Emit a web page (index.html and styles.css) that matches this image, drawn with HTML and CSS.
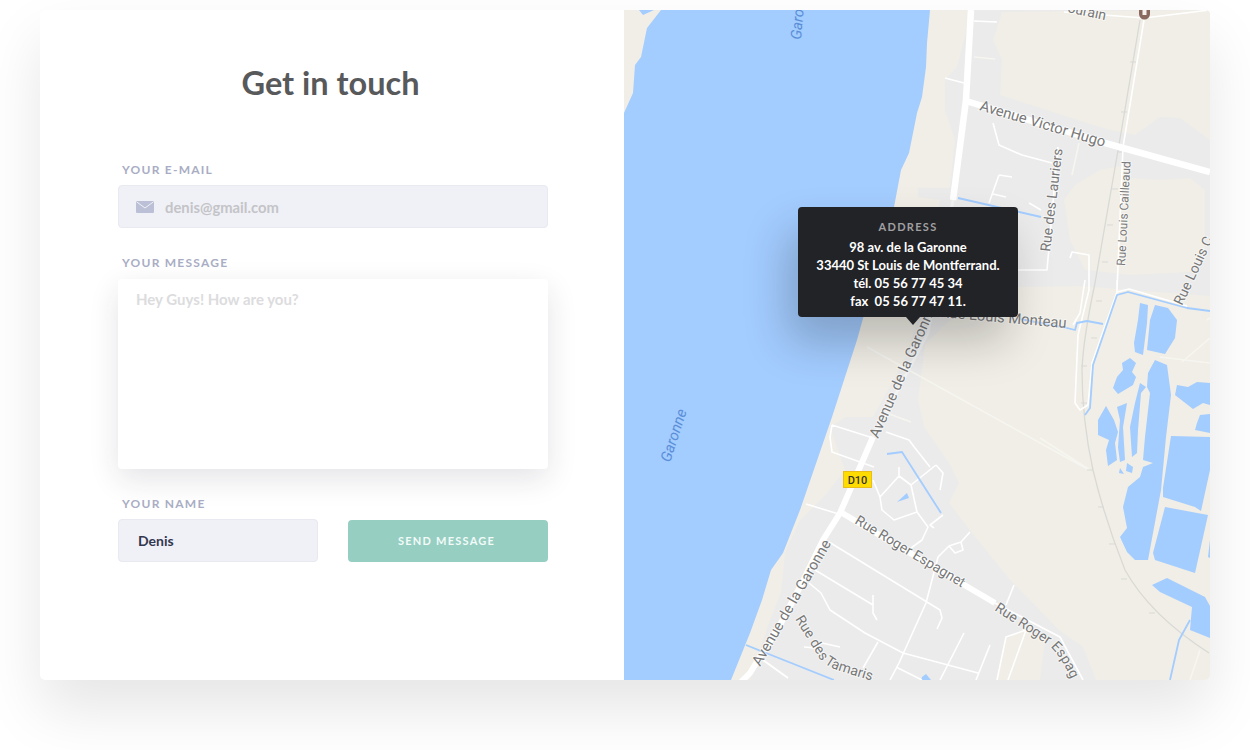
FILE: index.html
```html
<!DOCTYPE html>
<html lang="en">
<head>
<meta charset="utf-8">
<title>Get in touch</title>
<link rel="stylesheet" href="styles.css">
</head>
<body>
<main class="card">
  <section class="form">
    <h1 class="title">Get in touch</h1>
    <div class="label">YOUR E-MAIL</div>
    <div class="input email">
      <svg class="mail" viewBox="0 0 18 12" width="18" height="12"><rect width="18" height="12" rx="1" fill="#bcc0d6"/><path d="M0.5 0.8 L9 7 L17.5 0.8" fill="none" stroke="#f0f1f6" stroke-width="1"/></svg>
      <span>denis@gmail.com</span>
    </div>
    <div class="label gap">YOUR MESSAGE</div>
    <div class="textarea">Hey Guys! How are you?</div>
    <div class="bottom">
      <div class="name-col">
        <div class="label gap">YOUR NAME</div>
        <div class="input name">Denis</div>
      </div>
      <div class="button">SEND MESSAGE</div>
    </div>
  </section>
  <section class="map">
    <svg class="map-svg" viewBox="624 10 586 670" width="586" height="670">
      <defs>
        <path id="lower-espagnet" d="M994 610L1048 645Q1062 656 1074 686"/>
        <path id="tamaris" d="M795 619L820 659Q827 667 840 671L882 684"/>
      </defs>
      <rect class="land" x="624" y="10" width="586" height="670"/>
      <!-- built-up zones -->
      <path class="urban" d="M972 10L1210 10L1210 296L1130 290L1080 286L1018 287L1000 300L960 310L945 325L925 345L918 400L924 427L949 463L959 483L949 503L972 533L1010 580L1059 630L1083 647L1096 680L750 680L770 620L781 593L785 553L800 520L827 493L845 470L830 427L846 417L873 417L903 363L911 340L925 300L940 200L918 197L918 188L950 188L955 140L945 110L945 80L957 67Z"/>
      <path class="land" d="M1002 12L1210 10L1210 140L1180 118L1160 117L1135 135L1110 130L1090 124L1000 95L1002 60L993 40Z"/>
      <path class="land" d="M1064 200L1075 185L1100 170L1125 165L1130 178L1160 180L1190 178L1205 190L1205 250L1190 272L1130 275L1085 270L1070 240Z"/>
      <path class="land" d="M997 680L1005 640L1026 628L1045 640L1040 680Z"/>
      <!-- river -->
      <path class="water" d="M661 10L647 28L641 57L635 65L633 93L624 113L624 680L731 680L750 633L762 600L771 570L783 553L800 510L832 417L857 340L894 207L901 170L909 153L917 113L922 97L926 67L927 43L930 10Z"/>
      <path class="water" d="M639 10L654 10L643 15Z"/>
      <!-- ponds -->
      <path class="water" d="M1140 303L1148 305L1147 323L1143 355L1135 352L1134 343L1138 320Z"/>
      <path class="water" d="M1155 305L1168 308L1177 320L1175 338L1165 354L1147 350L1150 320Z"/>
      <path class="water" d="M1130 358L1136 363L1132 372L1136 377L1133 385L1118 394L1113 388L1117 377L1123 370L1122 363Z"/>
      <path class="water" d="M1155 360L1167 365L1171 395L1166 437L1161 490L1148 560L1135 560L1127 552L1120 537L1127 528L1123 507L1128 487L1140 477L1143 467L1153 463L1143 460L1145 437L1150 393L1147 387L1148 373Z"/>
      <path class="water" d="M1140 383L1146 387L1141 393L1138 430L1137 453L1132 457L1130 427L1135 403Z"/>
      <path class="water" d="M1117 407L1127 403L1123 427L1125 460L1120 462L1118 447L1120 420Z"/>
      <path class="water" d="M1106 406L1114 420L1118 432L1115 443L1117 460L1108 466L1106 450L1109 440L1098 435L1098 420Z"/>
      <path class="water" d="M1127 463L1133 467L1132 473L1126 471Z"/>
      <path class="water" d="M1120 468L1124 474L1119 473Z"/>
      <path class="water" d="M1177 385L1188 387L1197 382L1210 383L1210 405L1203 403L1193 409L1175 395Z"/>
      <path class="water" d="M1200 415L1210 414L1210 433L1195 430L1197 423Z"/>
      <path class="water" d="M1171 436L1210 437L1210 470L1201 511L1195 507L1163 497L1163 488Z"/>
      <path class="water" d="M1165 507L1208 515L1195 573L1155 560L1153 553Z"/>
      <path class="water" d="M1152 585L1167 578L1205 597L1210 606L1210 638L1190 630L1192 607L1160 592Z"/>
      <path class="water" d="M1208 557L1210 540L1210 558Z"/>
      <path class="water" d="M897 502L907 493L909 498Z"/>
      <path class="water" d="M922 677L926 674L931 680L921 680Z"/>
      <!-- faint lines -->
      <path class="faint" d="M867 347L1089 470M884 412L911 422M974 57L995 59M1040 438L1090 470M1160 357L1210 363M1182 362L1210 338M763 660L788 678M1072 175L1079 143M1207 320L1210 318M1190 680L1200 650"/>
      <!-- rail -->
      <path class="rail" d="M1140 20L1121 133L1095 283Q1083 340 1082 370Q1082 420 1093 470Q1105 520 1125 570Q1150 615 1209 653"/>
      <path class="tick" d="M1130 62h6M1121 112h6M1117 152h6M1112 189h6M1107 225h6M1102 262h6M1096 301h6M1091 338h6M1081 366h6M1081 403h6M1087 470h6M1098 507h6M1109 544h6M1121 579h6M1149 613h6"/>
      <!-- minor roads -->
      <path class="road" d="M974 21L997 22M945 78L964 83M993 123L999 145L1022 155L1052 163M999 175L1012 177M999 175L989 203M993 194L1006 197M1029 203L1041 210M1058 147L1047 270L1018 270M1070 258L1072 252L1089 255L1089 290L1078 335L1075 403L1080 410L1088 405L1092 363L1117 292L1117 280M1117 292L1129 289L1187 306M1085 280L1080 313L1073 325M1144 20L1123 147L1117 290M1064 12L1144 18L1210 10"/>
      <path class="road" d="M806 504L842 515M832 425L873 438M832 425L830 437L832 452L874 467M886 432L909 440L915 448L930 467M936 465L943 473L940 490M936 465L911 485L899 476L880 497L882 510L894 520L917 512M899 467L899 476M911 485L917 512L928 527L922 540L911 548M943 515L930 525L934 528M880 497L873 480M970 532L961 542L949 546L938 557L926 603L899 663L890 680M961 542L963 550L955 553L949 546M829 542L940 610L942 618L937 629M815 570L873 605L873 613L877 620M873 605L873 595M809 583L821 593L830 610L865 633L903 653L978 673M878 642L863 668M964 633L940 680M990 645L976 680M1014 585L1006 605M1026 630L1006 637L997 680M1026 630L1008 680M896 667L922 680M804 647L815 648L822 643L840 647"/>
      <path class="road" d="M763 660L788 678"/>
      <!-- main roads -->
      <path class="thin-main" d="M953 200L928 333L873 437"/>
      <path class="main" d="M971 10L966 100L953 200"/>
      <path class="main" d="M966 101L1105 143L1210 172"/>
      <path class="main lower" d="M873 437L850 490L840 513L823 540L800 587L781 623L750 673L737 686"/>
      <path class="main lower" d="M842 513L995 603"/>
      <path class="road" d="M995 603L1060 637L1083 680"/>
      <!-- streams -->
      <path class="stream" d="M958 198L1041 217M887 454L902 452L941 513M1020 319L1067 328L1075 330L1077 323L1087 321L1103 324M1085 415L1090 408L1093 365L1117 295L1128 292L1187 308L1210 311M1190 620L1179 640L1170 680M746 645L834 680"/>
      <!-- marker -->
      <path class="marker" d="M1139 10h11v4a5.500 5.500 0 0 1-11 0Z"/>
      <path class="marker-in" d="M1142.500 10h4v5h-4Z"/>
      <!-- labels -->
      <text class="lbl big" transform="translate(979 110) rotate(16.500)">Avenue Victor Hugo</text>
      <text class="lbl" transform="translate(1050 252) rotate(-83)">Rue des Lauriers</text>
      <text class="lbl sm" transform="translate(1125 266) rotate(-87)">Rue Louis Cailleaud</text>
      <text class="lbl" transform="translate(1182 306) rotate(-65)">Rue Louis C</text>
      <text class="lbl" transform="translate(1067 12) rotate(12)">ourain</text>
      <text class="lbl big" transform="translate(940 317) rotate(5)">Rue Louis Monteau</text>
      <text class="lbl big" transform="translate(878 439) rotate(-66)">Avenue de la Garonne</text>
      <text class="lbl big" transform="translate(760 667) rotate(-60)">Avenue de la Garonne</text>
      <text class="lbl" transform="translate(854 523) rotate(31)">Rue Roger Espagnet</text>
      <text class="lbl"><textPath href="#lower-espagnet">Rue Roger Espag</textPath></text>
      <text class="lbl"><textPath href="#tamaris">Rue des Tamaris</textPath></text>
      <text class="wlbl" transform="translate(801 40) rotate(-85)">Garo</text>
      <text class="wlbl" transform="translate(670 463) rotate(-72)">Garonne</text>
      <rect class="shield" x="843.500" y="471.500" width="28" height="16"/>
      <text class="shield-text" x="857.500" y="483.500">D10</text>
    </svg>
    <div class="tip">
      <div class="tip-head">ADDRESS</div>
      <div>98 av. de la Garonne</div>
      <div>33440 St Louis de Montferrand.</div>
      <div>tél. 05 56 77 45 34</div>
      <div>fax&nbsp; 05 56 77 47 11.</div>
    </div>
  </section>
</main>
</body>
</html>
```
FILE: styles.css
```css
* { box-sizing: border-box; }
html, body { margin: 0; height: 100%; background: #fff; overflow: hidden; }
body { padding: 10px 40px; font-family: "Lato", "Liberation Sans", sans-serif; }
.card {
  display: flex;
  width: 1170px;
  height: 670px;
  border-radius: 5px;
  background: #fff;
  box-shadow: 0 30px 60px rgba(0, 0, 0, .1);
}
.form { width: 584px; flex: none; padding: 53px 76px 0 78px; }
.title {
  margin: 0 5px 59px 0;
  text-align: center;
  font-size: 32.500px;
  line-height: 40px;
  font-weight: 700;
  color: #58595b;
}
.label {
  height: 16px;
  line-height: 16px;
  margin: 0 0 7px 4px;
  font-size: 12px;
  font-weight: 700;
  letter-spacing: 1.250px;
  color: #a9adc4;
}
.label.gap { margin-top: 27px; margin-bottom: 8px; }
.input {
  display: flex;
  align-items: center;
  height: 43px;
  border: 1px solid #e8e9f1;
  border-radius: 4px;
  background: #f0f1f6;
  font-weight: 700;
}
.email { padding-left: 17px; gap: 11px; color: #c4c4c8; font-size: 14.800px; }
.mail { flex: none; }
.textarea {
  height: 190px;
  padding: 12px 18px;
  border-radius: 4px;
  background: #fff;
  box-shadow: 0 10px 30px rgba(30, 30, 60, .12);
  font-size: 15px;
  line-height: 17px;
  font-weight: 700;
  color: #dcdcde;
}
.bottom { display: flex; gap: 30px; align-items: flex-end; }
.name-col { width: 200px; }
.name-col .label { margin-bottom: 7px; }
.name { padding-left: 19px; color: #33374f; font-size: 14px; }
.button {
  width: 200px;
  height: 42px;
  padding-right: 3px;
  border-radius: 4px;
  background: #96cec2;
  color: #f2fbf8;
  text-align: center;
  line-height: 42px;
  font-size: 11px;
  font-weight: 700;
  letter-spacing: 1.250px;
}
.map { position: relative; flex: 1; border-radius: 0 5px 5px 0; }
.map-svg { display: block; border-radius: 0 5px 5px 0; }
.land { fill: #f0eee6; }
.urban { fill: #ebebeb; }
.water { fill: #a3ccff; }
.road, .thin-main, .main, .faint, .rail, .tick, .stream {
  fill: none;
  stroke-linejoin: round;
}
.road { stroke: #fff; stroke-width: 1.600; }
.faint { stroke: #f6f5f0; stroke-width: 1.600; }
.thin-main { stroke: #f3f3f3; stroke-width: 3; }
.main { stroke: #fff; stroke-width: 6.500; }
.main.lower { stroke-width: 6; }
.rail { stroke: #d9d9d5; stroke-width: 1.300; }
.tick { stroke: #d9d9d5; stroke-width: 1; }
.stream { stroke: #a3ccff; stroke-width: 1.800; }
.marker { fill: #8a6a60; }
.marker-in { fill: #f6f3ee; }
.lbl {
  font-family: "Roboto", sans-serif;
  font-size: 14px;
  fill: #787878;
  stroke: #fff;
  stroke-width: 2px;
  stroke-opacity: .5;
  paint-order: stroke;
}
.lbl.big { font-size: 14.800px; }
.lbl.sm { font-size: 12px; }
.wlbl {
  font-family: "Roboto", sans-serif;
  font-size: 15px;
  font-style: italic;
  fill: #5b8fd8;
}
.shield { fill: #ffdc00; stroke: #e9bd1a; }
.shield-text {
  font-family: "Roboto", sans-serif;
  font-size: 11px;
  font-weight: 500;
  text-anchor: middle;
  fill: #333;
}
.tip {
  position: absolute;
  left: 174px;
  top: 197px;
  width: 220px;
  height: 110px;
  padding-top: 11px;
  border-radius: 4px;
  background: #222327;
  box-shadow: -10px 25px 45px rgba(0, 0, 0, .22);
  color: #fff;
  font-size: 13px;
  font-weight: 700;
  line-height: 18px;
  text-align: center;
}
.tip::after {
  content: "";
  position: absolute;
  left: 108px;
  top: 110px;
  border: 7px solid transparent;
  border-top: 8px solid #222327;
  border-bottom: 0;
}
.tip-head { margin-bottom: 2px; color: #a0a0a2; font-size: 11px; letter-spacing: 1.300px; }
```
